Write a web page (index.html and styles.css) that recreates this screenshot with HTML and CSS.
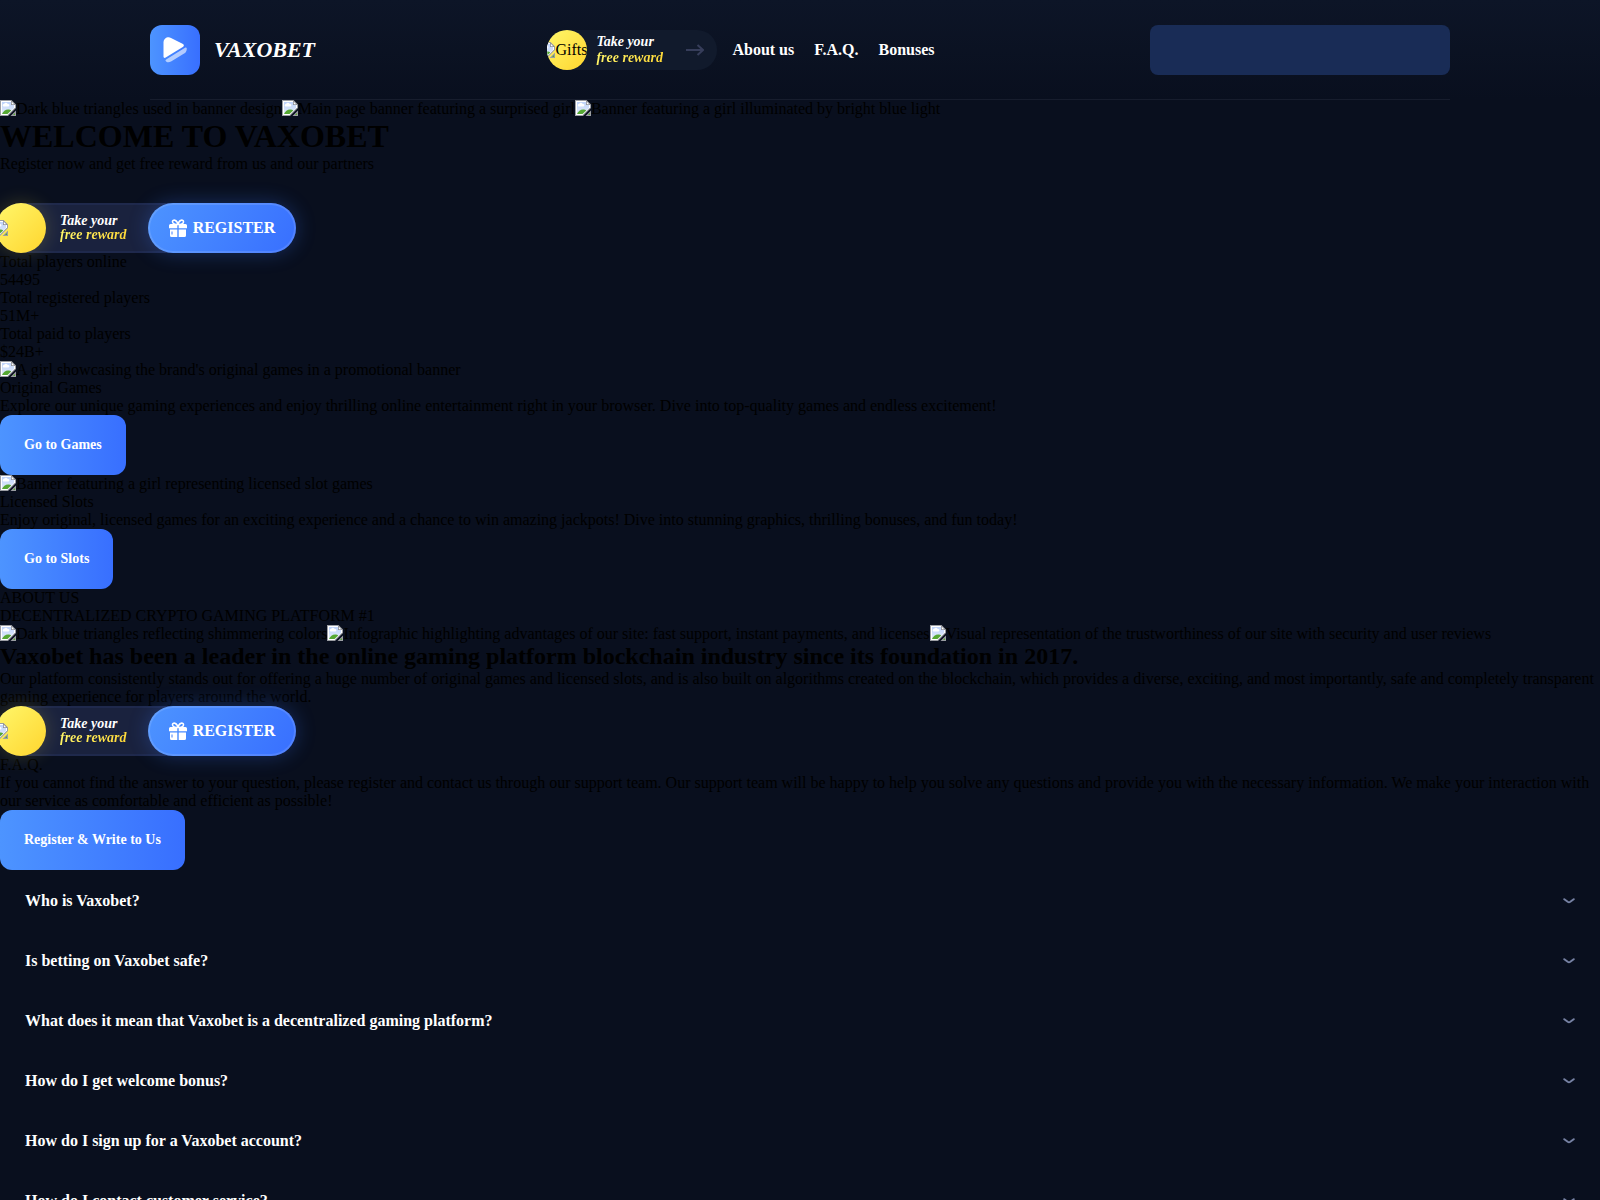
FILE: index.html
```html
<!DOCTYPE html>
<html lang="en">
<head>
<meta charset="utf-8">
<meta name="viewport" content="width=device-width, initial-scale=1">
<title>Vaxobet</title>
<link rel="stylesheet" href="styles.css">
</head>
<body>
<svg class="sprite" aria-hidden="true">
  <defs>
    <linearGradient id="sky" x1="0" y1="0" x2="0" y2="1"><stop offset="0" stop-color="#bfd3fa"/><stop offset="1" stop-color="#e3ecfb"/></linearGradient>
  </defs>
  <symbol id="picture" viewBox="0 0 16 16">
    <path d="M0 0h11.5L16 4.5V8L8 16H0z" fill="#9b9da3"/>
    <path d="M1 1h10l4 4v2.6L7.6 15H1z" fill="#fff"/>
    <path d="M2 2h9v3h3v3l-6.5 6H2z" fill="url(#sky)"/>
    <path d="M3.500 6.500a1.300 1.300 0 0 1 .6-2.500 2 2 0 0 1 3.600 0 1.300 1.300 0 0 1 .8 2.500z" fill="#fff"/>
    <path d="M2 14c1-2.500 3.500-4.500 6-4.500 1.500 0 2.500.3 3.200 1L7.500 14z" fill="#56a832"/>
    <path d="M11 0l5 5h-5z" fill="#8f9197"/>
    <path d="M11.800 1.800l2.400 2.400h-2.400z" fill="#fff"/>
    <path d="M16 10.500V16h-5.500z" fill="#9b9da3"/>
    <path d="M15 13v2h-2z" fill="#56a832"/>
  </symbol>
  <symbol id="gift" viewBox="0 0 18 18">
    <path d="M9 5.500C7.500 5.500 3.500 5 3.500 2.700 3.500.3 8 .3 9 5.500zM9 5.500c1.500 0 5.500-.5 5.500-2.800C14.500.3 10 .3 9 5.500z" fill="none" stroke="#fff" stroke-width="1.600"/>
    <path d="M1.500 5h6.800v4.200H0V6.500A1.500 1.500 0 0 1 1.500 5zM9.700 5h6.800A1.500 1.500 0 0 1 18 6.500v2.700H9.700zM1 10.500h7.300V18H2.500A1.500 1.500 0 0 1 1 16.500zM9.700 10.500H17v6a1.500 1.500 0 0 1-1.500 1.500H9.700z" fill="#fff"/>
    <path d="M3 12.500v3" stroke="#4080ff" stroke-width="1"/>
  </symbol>
  <symbol id="chevron" viewBox="0 0 12 6"><path d="M1.300 1.200L4.700 3.700Q6 4.600 7.300 3.700L10.700 1.200" fill="none" stroke="#7681a3" stroke-width="2" stroke-linecap="round"/></symbol>
</svg>

<header class="header">
  <div class="header-inner">
    <a class="logo" href="#">
      <span class="logo-mark">
        <svg width="24" height="26" viewBox="0 0 24 26" aria-hidden="true">
          <path d="M.5 5.500C.5 1.500 4.500-.7 8 .9L19.500 6.800c1.800 1 1.800 2.300.3 3.300L2.700 20.600C1.500 21.300.5 20.700.5 19.500z" fill="#fff"/>
          <path d="M3.500 22.200L22 10.800c1.500-.8 2 .2 1.700 1.900-.3 1.800-1.100 3-2.600 3.900L8.500 24.200C5.800 25.800 3.800 25.500 2.700 24c-.5-.7 0-1.300.8-1.800z" fill="#fff" fill-opacity=".6"/>
        </svg>
      </span>
      <span>VAXOBET</span>
    </a>
    <nav class="nav">
      <a class="reward" href="#">
        <span class="coin coin-small"><svg class="pic" aria-hidden="true"><use href="#picture"/></svg>Gifts</span>
        <span class="reward-text">Take your<br><em>free reward</em></span>
        <svg class="arrow" width="18" height="12" viewBox="0 0 18 12" aria-hidden="true"><path d="M0 6h17M11.500 1L17 6l-5.500 5" fill="none" stroke="#363d5a" stroke-width="2"/></svg>
      </a>
      <a class="nav-link" href="#about">About us</a>
      <a class="nav-link" href="#faq">F.A.Q.</a>
      <a class="nav-link" href="#">Bonuses</a>
    </nav>
    <div class="account"></div>
  </div>
</header>

<main>
  <section>
    <div class="pictures"><span><svg class="pic"><use href="#picture"/></svg>Dark blue triangles used in banner design</span><span><svg class="pic"><use href="#picture"/></svg>Main page banner featuring a surprised girl</span><span><svg class="pic"><use href="#picture"/></svg>Banner featuring a girl illuminated by bright blue light</span></div>
    <h1>WELCOME TO VAXOBET</h1>
    <p>Register now and get free reward from us and our partners</p>
    <div class="join join-hero">
      <span class="coin"><svg class="pic" aria-hidden="true"><use href="#picture"/></svg></span>
      <span class="reward-text">Take your<br><em>free reward</em></span>
      <button class="register" type="button"><svg width="18" height="18" aria-hidden="true"><use href="#gift"/></svg>REGISTER</button>
    </div>
    <div>Total players online</div>
    <div>54495</div>
    <div>Total registered players</div>
    <div>51M+</div>
    <div>Total paid to players</div>
    <div>$24B+</div>
  </section>

  <section>
    <div class="pictures"><span><svg class="pic"><use href="#picture"/></svg>A girl showcasing the brand's original games in a promotional banner</span></div>
    <div>Original Games</div>
    <p>Explore our unique gaming experiences and enjoy thrilling online entertainment right in your browser. Dive into top-quality games and endless excitement!</p>
    <button class="button" type="button">Go to Games</button>
    <div class="pictures"><span><svg class="pic"><use href="#picture"/></svg>Banner featuring a girl representing licensed slot games</span></div>
    <div>Licensed Slots</div>
    <p>Enjoy original, licensed games for an exciting experience and a chance to win amazing jackpots! Dive into stunning graphics, thrilling bonuses, and fun today!</p>
    <button class="button" type="button">Go to Slots</button>
  </section>

  <section id="about">
    <div>ABOUT US</div>
    <div>DECENTRALIZED CRYPTO GAMING PLATFORM #1</div>
    <div class="pictures"><span><svg class="pic"><use href="#picture"/></svg>Dark blue triangles reflecting shimmering colors</span><span><svg class="pic"><use href="#picture"/></svg>Infographic highlighting advantages of our site: fast support, instant payments, and licenses</span><span><svg class="pic"><use href="#picture"/></svg>Visual representation of the trustworthiness of our site with security and user reviews</span></div>
    <h2>Vaxobet has been a leader in the online gaming platform blockchain industry since its foundation in 2017.</h2>
    <p>Our platform consistently stands out for offering a huge number of original games and licensed slots, and is also built on algorithms created on the blockchain, which provides a diverse, exciting, and most importantly, safe and completely transparent gaming experience for players around the world.</p>
    <div class="join">
      <span class="coin"><svg class="pic" aria-hidden="true"><use href="#picture"/></svg></span>
      <span class="reward-text">Take your<br><em>free reward</em></span>
      <button class="register" type="button"><svg width="18" height="18" aria-hidden="true"><use href="#gift"/></svg>REGISTER</button>
    </div>
  </section>

  <section id="faq">
    <div>F.A.Q.</div>
    <p>If you cannot find the answer to your question, please register and contact us through our support team. Our support team will be happy to help you solve any questions and provide you with the necessary information. We make your interaction with our service as comfortable and efficient as possible!</p>
    <button class="button" type="button">Register &amp; Write to Us</button>
    <div class="questions">
      <button class="question" type="button">Who is Vaxobet?<svg width="12" height="6" aria-hidden="true"><use href="#chevron"/></svg></button>
      <button class="question" type="button">Is betting on Vaxobet safe?<svg width="12" height="6" aria-hidden="true"><use href="#chevron"/></svg></button>
      <button class="question" type="button">What does it mean that Vaxobet is a decentralized gaming platform?<svg width="12" height="6" aria-hidden="true"><use href="#chevron"/></svg></button>
      <button class="question" type="button">How do I get welcome bonus?<svg width="12" height="6" aria-hidden="true"><use href="#chevron"/></svg></button>
      <button class="question" type="button">How do I sign up for a Vaxobet account?<svg width="12" height="6" aria-hidden="true"><use href="#chevron"/></svg></button>
      <button class="question" type="button">How do I contact customer service?<svg width="12" height="6" aria-hidden="true"><use href="#chevron"/></svg></button>
    </div>
  </section>
</main>
</body>
</html>
```
FILE: styles.css
```css
* {
  box-sizing: border-box;
  margin: 0;
  padding: 0;
}

html {
  scrollbar-width: none;
}

body {
  background: #090f1e;
  color: #000;
  font: 16px/18px "Liberation Serif", "Times New Roman", serif;
  overflow-x: hidden;
}

a {
  color: inherit;
  text-decoration: none;
}

button {
  border: 0;
  background: none;
  color: #fff;
  font-family: inherit;
  font-weight: 700;
  cursor: pointer;
}

h1 {
  font-size: 32px;
  line-height: 37px;
}

h2 {
  font-size: 24px;
  line-height: 27px;
}

.sprite {
  position: absolute;
  width: 0;
  height: 0;
}

/* Header */
.header {
  background: linear-gradient(#0d1527, #090f1e);
}

.header-inner {
  display: flex;
  justify-content: space-between;
  align-items: center;
  max-width: 1300px;
  height: 100px;
  margin: 0 auto;
  border-bottom: 1px solid #171d2d;
}

.logo {
  display: flex;
  align-items: center;
  gap: 14px;
  min-width: 182px;
  color: #fff;
  font-size: 22px;
  font-style: italic;
  font-weight: 700;
}

.logo-mark {
  display: grid;
  place-items: center;
  width: 50px;
  height: 50px;
  border-radius: 12px;
  background: linear-gradient(90deg, #4d94ff, #386fff);
}

.nav {
  display: flex;
  align-items: center;
  gap: 20px;
  color: #fff;
  font-weight: 700;
}

.reward {
  display: flex;
  align-items: center;
  width: 170px;
  height: 40px;
  margin-right: -5px;
  padding-right: 13px;
  border-radius: 20px;
  background: #111a2c;
}

.reward-text {
  margin-left: 9px;
  color: #fff;
  font-size: 14px;
  font-style: italic;
  font-weight: 700;
  line-height: 16px;
}

.reward-text em {
  background: linear-gradient(120deg, #fff76b, #ffd735);
  background-clip: text;
  color: transparent;
}

.arrow {
  margin-left: auto;
}

.account {
  width: 300px;
  height: 50px;
  border-radius: 8px;
  background: #192c56;
}

.coin {
  position: relative;
  flex: none;
  width: 50px;
  height: 50px;
  border-radius: 50%;
  background: linear-gradient(135deg, #fff76b, #ffd52e);
  box-shadow: 0 0 20px rgba(255, 230, 70, 0.2);
}

.coin .pic {
  position: absolute;
  top: 17px;
  left: -4px;
}

.coin-small {
  display: flex;
  align-items: center;
  justify-content: flex-end;
  width: 40px;
  height: 40px;
  overflow: hidden;
  color: #000;
  font-weight: 400;
  box-shadow: none;
}

.coin-small .pic {
  position: static;
}

/* Picture placeholders */
.pictures {
  height: 18px;
}

.pictures span {
  display: inline-block;
}

.pic {
  flex: none;
  width: 16px;
  height: 16px;
  vertical-align: top;
}

/* Reward and registration bar */
.join {
  position: relative;
  display: flex;
  align-items: center;
  width: 300px;
  height: 50px;
  margin-left: -4px;
  border-radius: 25px;
  background: #1a223e;
  box-shadow: inset 0 0 0 2px rgba(60, 90, 160, 0.15);
}

.join-hero {
  margin-top: 30px;
}

.join .reward-text {
  margin-left: 14px;
  line-height: 14px;
}

.register {
  display: flex;
  align-items: center;
  justify-content: center;
  gap: 6px;
  width: 148px;
  height: 50px;
  margin-left: auto;
  border-radius: 25px;
  background: linear-gradient(120deg, #4d94ff, #386fff);
  box-shadow: 0 0 20px rgba(56, 120, 255, 0.3), inset 0 0 0 2px rgba(255, 255, 255, 0.12);
  font-size: 16px;
}

.button {
  display: block;
  height: 60px;
  padding: 0 24px;
  border-radius: 12px;
  background: linear-gradient(90deg, #4d94ff, #386fff);
  font-size: 14px;
}

/* Questions */
.question {
  display: flex;
  align-items: center;
  justify-content: space-between;
  width: 100%;
  height: 60px;
  padding: 2px 25px 0;
  font-size: 16px;
  text-align: left;
}
```
